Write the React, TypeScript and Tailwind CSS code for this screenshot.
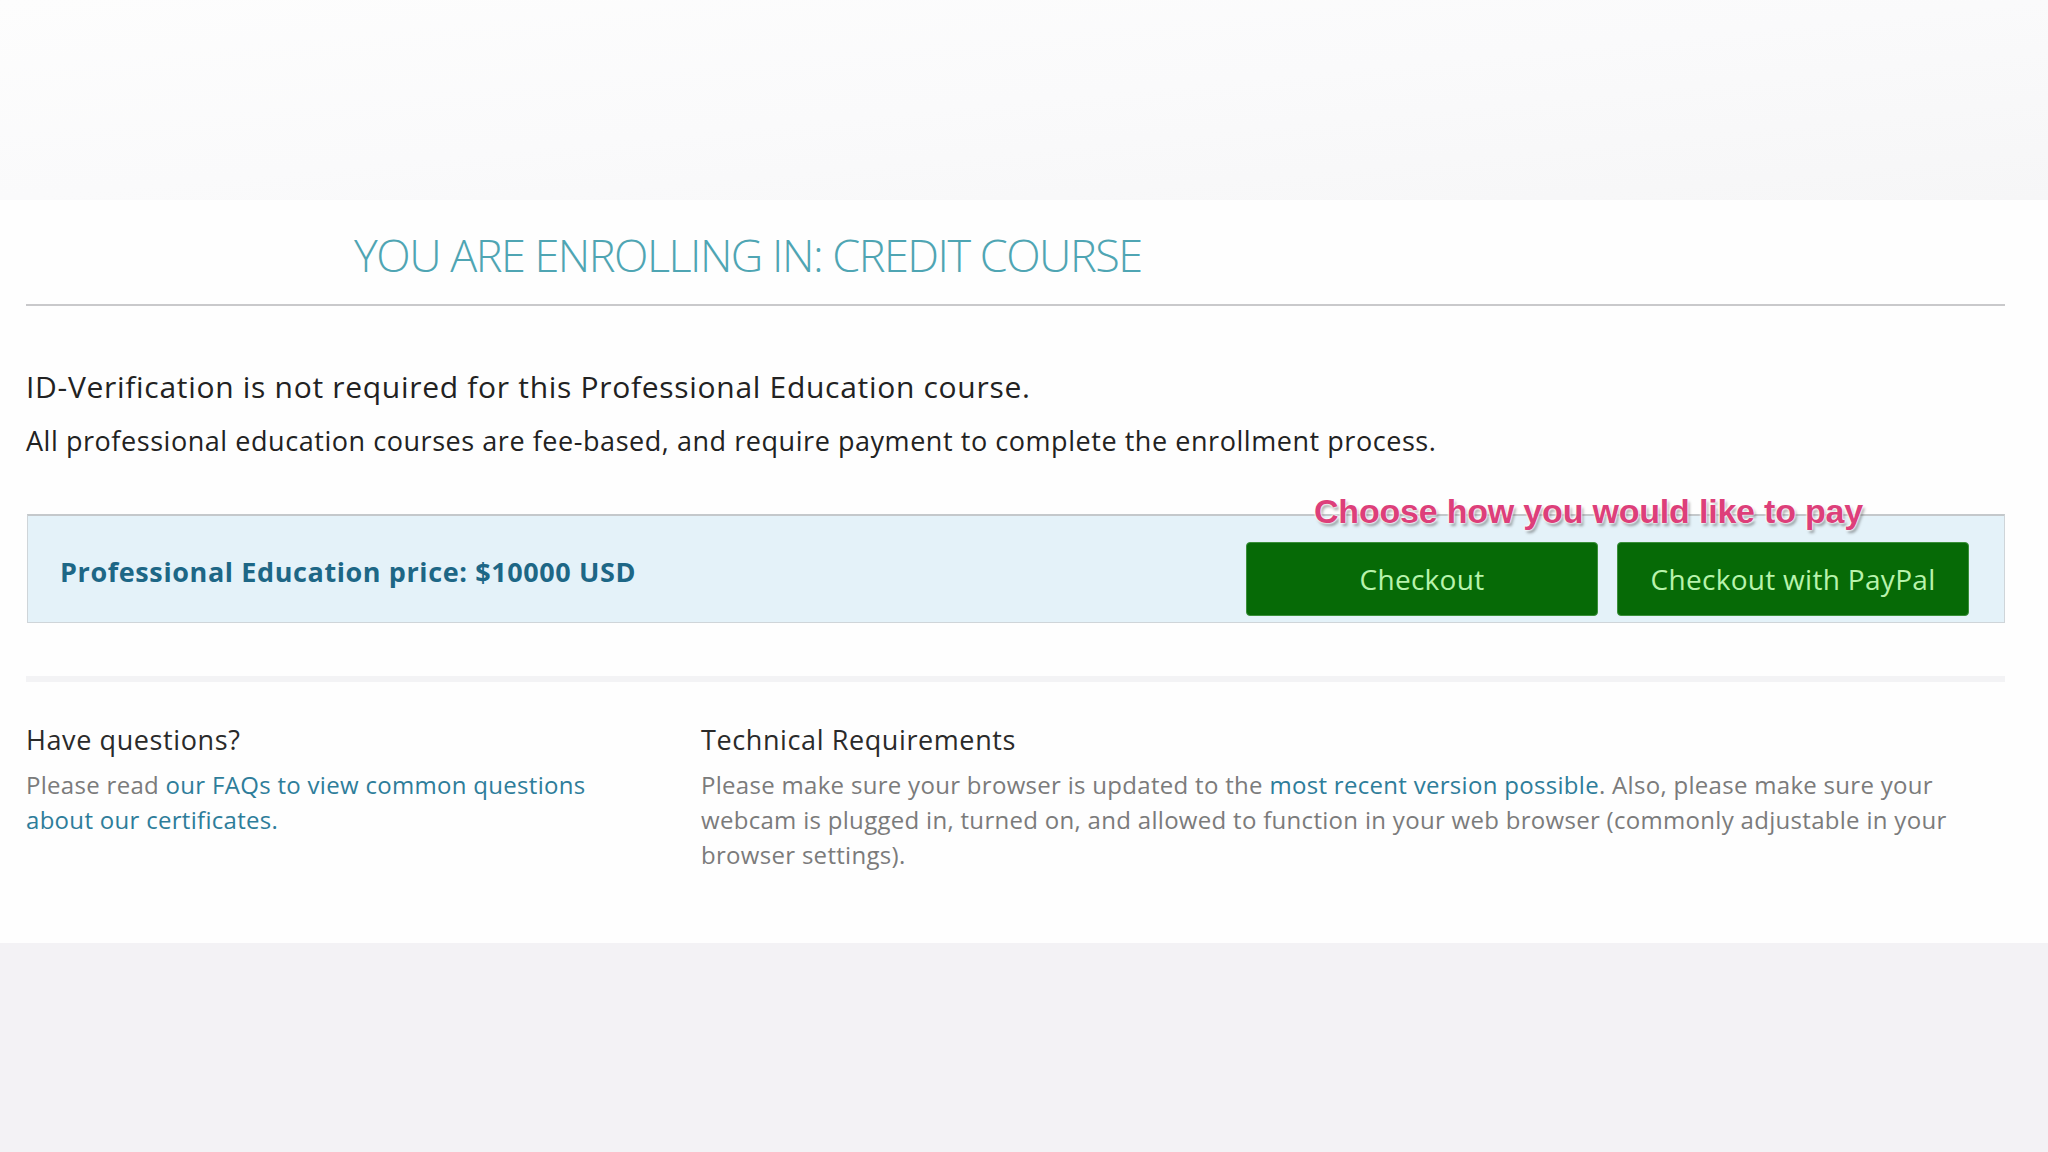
import React from "react";

export default function App() {
  return (
    <div
      className="w-[2048px] h-[1152px] flex flex-col bg-white overflow-hidden"
      style={{ fontFamily: '"Open Sans", "Noto Sans", sans-serif' }}
    >
      <div className="h-[200px] shrink-0 bg-gradient-to-br from-[#fdfdfd] via-[#fafafb] to-[#f6f6f7]" />
      <div className="flex flex-col pl-[26px] pr-[43px] pb-[71px] bg-[#fefefe]">
        <div className="pt-[28px] pb-[22px] pl-[328px] border-b-2 border-[#c9c9cb]">
          <h1 className="text-[45px] leading-[54px] font-light text-[#4fa5b3] tracking-[-1.5px]">
            YOU ARE ENROLLING IN: CREDIT COURSE
          </h1>
        </div>
        <p className="mt-[61px] text-[30px] leading-[40px] text-[#222] tracking-[0.7px]">
          ID-Verification is not required for this Professional Education course.
        </p>
        <p className="mt-[15px] text-[27px] leading-[38px] text-[#222] tracking-[0.55px]">
          All professional education courses are fee-based, and require payment to complete the enrollment process.
        </p>
        <div className="relative mt-[54px] h-[109px] flex items-start justify-between ml-[1px] border border-[#cfd5d9] border-t-[#c4c8cb] border-t-2 bg-[#e4f2f9]">
          <div className="pt-[38px] pl-[32px] text-[27px] leading-[36px] font-bold text-[#1d6786] tracking-[0.6px]">
            Professional Education price: $10000 USD
          </div>
          <div className="flex gap-[19px] pt-[26px] pr-[35px]">
            <button className="w-[352px] h-[74px] rounded-[4px] bg-[#066a06] border border-[#3a8f3a] text-[28px] text-[#b8f3ac] tracking-[0.3px]">
              Checkout
            </button>
            <button className="w-[352px] h-[74px] rounded-[4px] bg-[#066a06] border border-[#3a8f3a] text-[28px] text-[#b8f3ac] tracking-[0.3px]">
              Checkout with PayPal
            </button>
          </div>
          <div
            className="absolute left-[1286px] top-[-23px] text-[34px] leading-[36px] font-bold text-[#dd3f7a] tracking-[-0.2px] whitespace-nowrap [text-shadow:0_0_2px_#fff,0_0_2px_#fff,0_0_3px_#fff,2px_3px_3px_rgba(0,0,0,0.35)]"
            style={{ fontFamily: '"Liberation Sans", Arial, sans-serif' }}
          >
            Choose how you would like to pay
          </div>
        </div>
        <div className="mt-[53px] h-[6px] bg-[#f3f3f5]" />
        <div className="mt-[41px] grid grid-cols-[620px_1310px] gap-[55px]">
          <div>
            <h2 className="text-[27px] leading-[34px] text-[#2a2a2a] tracking-[0.6px]">Have questions?</h2>
            <p className="mt-[10px] text-[24px] leading-[35px] text-[#7b7b7b] tracking-[0.3px]">
              Please read{" "}
              <a className="text-[#2e7d9a]">our FAQs to view common questions about our certificates.</a>
            </p>
          </div>
          <div>
            <h2 className="text-[27px] leading-[34px] text-[#2a2a2a] tracking-[0.6px]">Technical Requirements</h2>
            <p className="mt-[10px] text-[24px] leading-[35px] text-[#7b7b7b] tracking-[0.3px]">
              Please make sure your browser is updated to the{" "}
              <a className="text-[#2e7d9a]">most recent version possible</a>. Also, please make sure your webcam is
              plugged in, turned on, and allowed to function in your web browser (commonly adjustable in your browser
              settings).
            </p>
          </div>
        </div>
      </div>
      <div className="flex-1 bg-[#f3f2f5]" />
    </div>
  );
}
